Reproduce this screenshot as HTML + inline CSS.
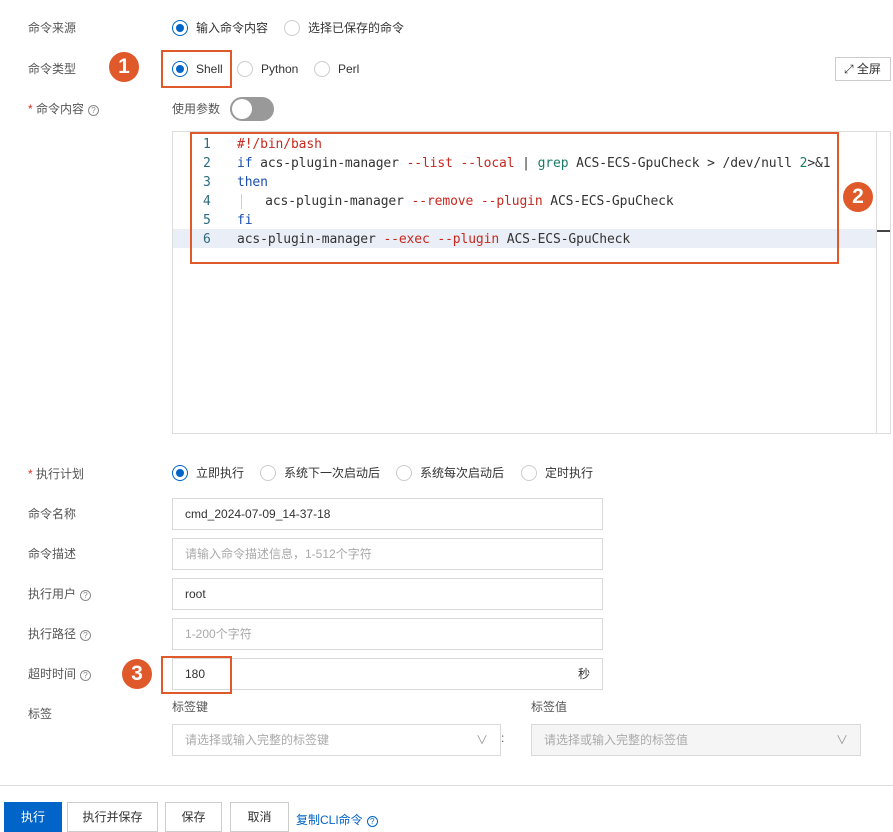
<!DOCTYPE html><html><head><meta charset="utf-8"><style>
*{box-sizing:border-box;margin:0;padding:0}
body{width:893px;height:830px;background:#fff;position:relative;overflow:hidden;font-family:"Liberation Sans","Noto Sans CJK SC",sans-serif;font-size:12px;color:#333}
.a{position:absolute;white-space:nowrap}
.lbl{position:absolute;left:28px;color:#555;font-size:12px;line-height:16px}
.r{position:absolute;width:16px;height:16px;border:1px solid #ccc;border-radius:50%;background:#fff}
.r.on{border-color:#0064c8}
.r.on::after{content:"";position:absolute;left:3px;top:3px;width:8px;height:8px;border-radius:50%;background:#0064c8}
.rt{position:absolute;font-size:12px;line-height:16px;color:#333}
.in{position:absolute;left:172px;width:431px;height:32px;border:1px solid #d9d9d9;padding-left:12px;line-height:30px;font-size:12px;color:#333}
.ph{color:#aaa}
.q{display:inline-block;width:11px;height:11px;border:1px solid #888;border-radius:50%;font-size:8px;line-height:9px;text-align:center;color:#888;margin-left:4px;vertical-align:0}
.ob{position:absolute;border:2px solid #e0592a}
.bd{position:absolute;width:30px;height:30px;border-radius:50%;background:#e0592a;color:#fff;font-size:21px;line-height:30px;text-align:center;font-weight:bold}
.code{position:absolute;font-family:"DejaVu Sans Mono","Liberation Mono",monospace;font-size:13px;line-height:19px;letter-spacing:-0.12px;white-space:pre}
.ln{position:absolute;left:203px;color:#2b6a7e;font-family:"DejaVu Sans Mono",monospace;font-size:13px;line-height:19px}
.k{color:#1a4fb0}.d{color:#c8281e}.g{color:#1a7a6a}
.btn{position:absolute;top:802px;height:30px;border:1px solid #ccc;background:#fff;font-size:12px;line-height:28px;text-align:center;color:#333}
</style></head><body>
<div class="lbl" style="top:20px">命令来源</div>
<div class="r on" style="left:172px;top:20px"></div><div class="rt" style="left:196px;top:20px">输入命令内容</div>
<div class="r" style="left:284px;top:20px"></div><div class="rt" style="left:308px;top:20px">选择已保存的命令</div>

<div class="lbl" style="top:61px">命令类型</div>
<div class="r on" style="left:172px;top:61px"></div><div class="rt" style="left:196px;top:61px">Shell</div>
<div class="r" style="left:237px;top:61px"></div><div class="rt" style="left:261px;top:61px">Python</div>
<div class="r" style="left:314px;top:61px"></div><div class="rt" style="left:338px;top:61px">Perl</div>
<div class="ob" style="left:161px;top:50px;width:71px;height:38px"></div>
<div class="bd" style="left:109px;top:52px">1</div>
<div class="a" style="left:835px;top:57px;width:56px;height:24px;border:1px solid #ccc;font-size:12px;line-height:22px;padding-left:8px">⤢ 全屏</div>

<div class="lbl" style="top:101px"><span style="color:#d93026">*</span> 命令内容<span class="q">?</span></div>
<div class="rt" style="left:172px;top:101px;color:#555">使用参数</div>
<div class="a" style="left:230px;top:97px;width:44px;height:24px;border-radius:12px;background:#999"></div>
<div class="a" style="left:232px;top:99px;width:20px;height:20px;border-radius:50%;background:#fff"></div>

<div class="a" style="left:172px;top:131px;width:719px;height:303px;border:1px solid #ddd"></div>
<div class="a" style="left:876px;top:132px;width:1px;height:301px;background:#ddd"></div>
<div class="a" style="left:173px;top:229px;width:703px;height:19px;background:#eaeef7"></div>
<div class="a" style="left:877px;top:230px;width:13px;height:2px;background:#444"></div>
<div class="ln" style="top:135px">1<br>2<br>3<br>4<br>5<br>6</div>
<div class="code" style="left:237px;top:135px"><span class="d">#!/bin/bash</span>
<span class="k">if</span> acs-plugin-manager <span class="d">--list --local</span> | <span class="g">grep</span> ACS-ECS-GpuCheck &gt; /dev/null <span class="g">2</span>&gt;&amp;1
<span class="k">then</span>
<span style="border-left:1px solid #ccc;margin-left:4px"></span>   acs-plugin-manager <span class="d">--remove --plugin</span> ACS-ECS-GpuCheck
<span class="k">fi</span>
acs-plugin-manager <span class="d">--exec --plugin</span> ACS-ECS-GpuCheck</div>
<div class="ob" style="left:190px;top:132px;width:649px;height:132px"></div>
<div class="bd" style="left:843px;top:182px">2</div>

<div class="lbl" style="top:466px"><span style="color:#d93026">*</span> 执行计划</div>
<div class="r on" style="left:172px;top:465px"></div><div class="rt" style="left:196px;top:465px">立即执行</div>
<div class="r" style="left:260px;top:465px"></div><div class="rt" style="left:284px;top:465px">系统下一次启动后</div>
<div class="r" style="left:396px;top:465px"></div><div class="rt" style="left:420px;top:465px">系统每次启动后</div>
<div class="r" style="left:521px;top:465px"></div><div class="rt" style="left:545px;top:465px">定时执行</div>

<div class="lbl" style="top:506px">命令名称</div><div class="in" style="top:498px">cmd_2024-07-09_14-37-18</div>
<div class="lbl" style="top:546px">命令描述</div><div class="in ph" style="top:538px">请输入命令描述信息，1-512个字符</div>
<div class="lbl" style="top:586px">执行用户<span class="q">?</span></div><div class="in" style="top:578px">root</div>
<div class="lbl" style="top:626px">执行路径<span class="q">?</span></div><div class="in ph" style="top:618px">1-200个字符</div>
<div class="lbl" style="top:666px">超时时间<span class="q">?</span></div><div class="in" style="top:658px">180<span style="position:absolute;right:12px">秒</span></div>
<div class="ob" style="left:161px;top:656px;width:71px;height:38px"></div>
<div class="bd" style="left:122px;top:659px">3</div>

<div class="lbl" style="top:706px">标签</div>
<div class="rt" style="left:172px;top:699px;color:#555">标签键</div>
<div class="rt" style="left:531px;top:699px;color:#555">标签值</div>
<div class="in ph" style="top:724px;width:329px">请选择或输入完整的标签键<span style="position:absolute;right:12px;color:#999">∨</span></div>
<div class="a" style="left:501px;top:731px;color:#555">:</div>
<div class="in ph" style="top:724px;left:531px;width:330px;background:#f5f5f5">请选择或输入完整的标签值<span style="position:absolute;right:12px;color:#999">∨</span></div>

<div class="a" style="left:0;top:785px;width:893px;height:1px;background:#ddd"></div>
<div class="btn" style="left:4px;width:58px;background:#0064c8;border-color:#0064c8;color:#fff">执行</div>
<div class="btn" style="left:67px;width:91px">执行并保存</div>
<div class="btn" style="left:165px;width:57px">保存</div>
<div class="btn" style="left:230px;width:59px">取消</div>
<div class="a" style="left:296px;top:811px;color:#0064c8;font-size:12px">复制CLI命令<span class="q" style="border-color:#0064c8;color:#0064c8">?</span></div>
</body></html>
